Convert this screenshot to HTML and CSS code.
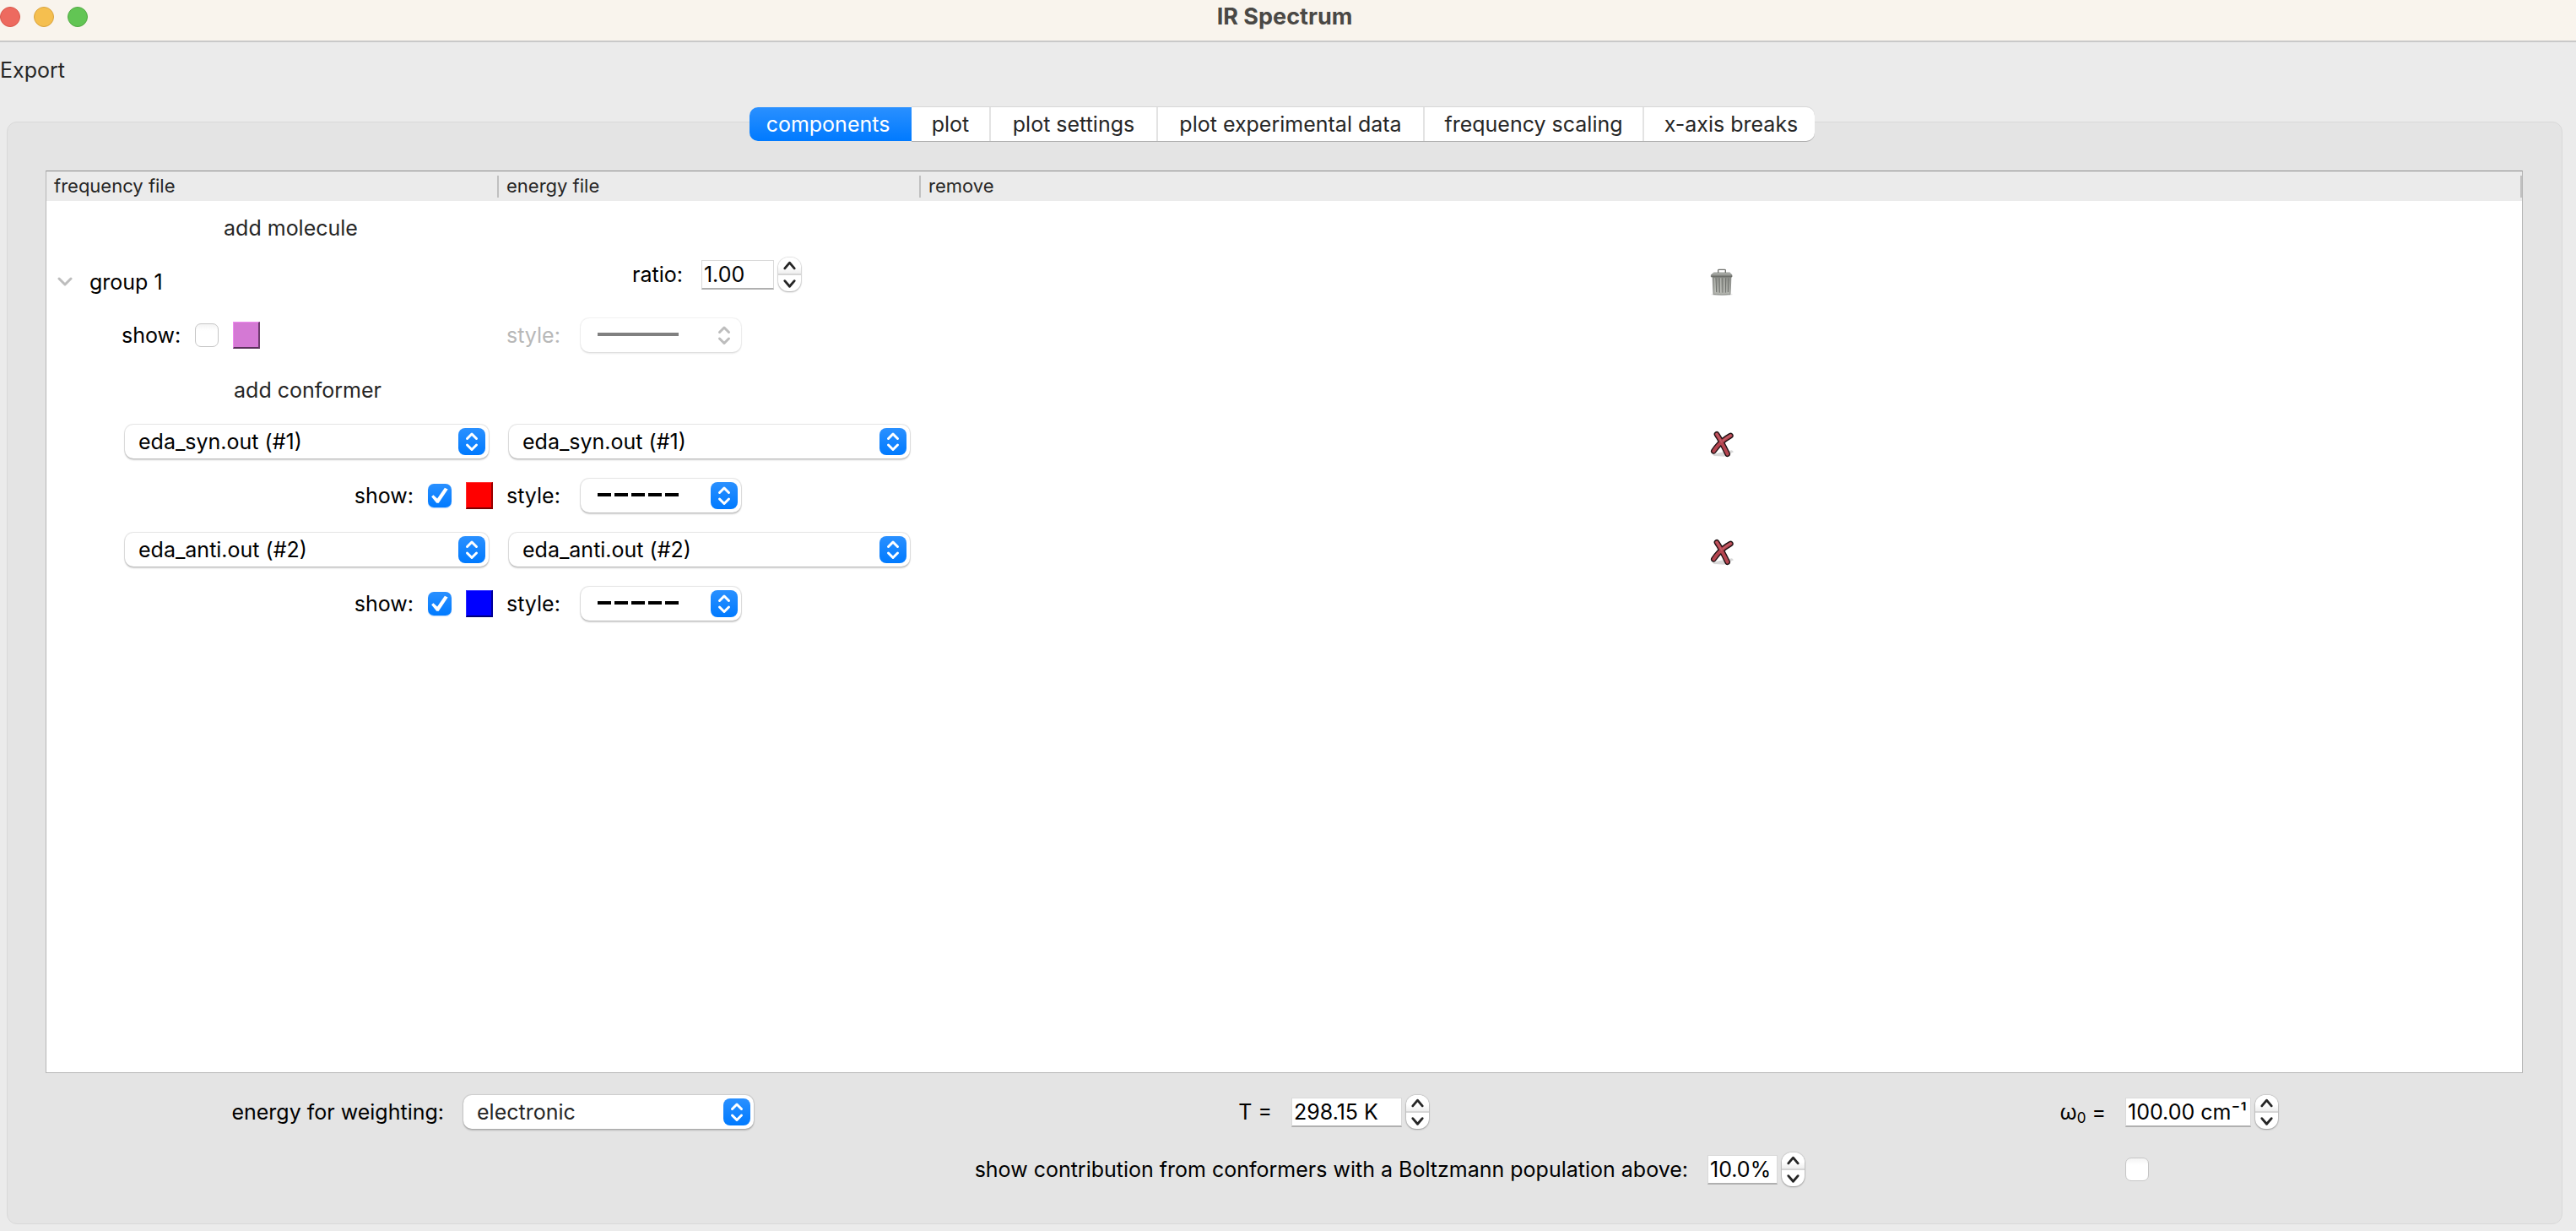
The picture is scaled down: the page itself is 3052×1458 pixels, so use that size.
FILE: index.html
```html
<!DOCTYPE html>
<html lang="en">
<head>
<meta charset="utf-8">
<title>IR Spectrum</title>
<link rel="stylesheet" href="styles.css">
</head>
<body>
<svg class="defs" aria-hidden="true">
  <defs>
    <linearGradient id="trash-fill" x1="0" x2="0" y1="0" y2="1">
      <stop offset="0" stop-color="#8b8d88"/><stop offset="1" stop-color="#b4b6b0"/>
    </linearGradient>
    <linearGradient id="lid-fill" x1="0" x2="0" y1="0" y2="1">
      <stop offset="0" stop-color="#c4c6c1"/><stop offset="1" stop-color="#666864"/>
    </linearGradient>
    <symbol id="arrows" viewBox="0 0 32 32">
      <path d="M10.500 12.500 16 7l5.500 5.500M10.500 20 16 25.500l5.500-5.500" fill="none" stroke="currentColor" stroke-width="3" stroke-linecap="round" stroke-linejoin="round"/>
    </symbol>
    <symbol id="up" viewBox="0 0 28 20">
      <path d="M8 13.500l6-7 6 7" fill="none" stroke="currentColor" stroke-width="3" stroke-linecap="round" stroke-linejoin="round"/>
    </symbol>
    <symbol id="down" viewBox="0 0 28 20">
      <path d="M8 7l6 7 6-7" fill="none" stroke="currentColor" stroke-width="3" stroke-linecap="round" stroke-linejoin="round"/>
    </symbol>
    <symbol id="cross" viewBox="0 0 84 96">
      <path d="M8 84 78 70 84 76 50 92 14 90z" fill="#d8d8d8"/>
      <path d="M24 13Q38 34 62 83M73 18Q34 40 13 73" fill="none" stroke="#1c1012" stroke-width="20" stroke-linecap="round"/>
      <path d="M24 13Q38 34 62 83M73 18Q34 40 13 73" fill="none" stroke="#b44550" stroke-width="12" stroke-linecap="round"/>
      <path d="M23 11Q34 28 42 42M74 16Q56 26 46 36" fill="none" stroke="#c5606a" stroke-width="4" stroke-linecap="round"/>
    </symbol>
    <symbol id="trash" viewBox="0 0 84 96">
      <ellipse cx="42" cy="92" rx="38" ry="4" fill="#e2e2e2"/>
      <path d="M9 26h66l-3 66q-30 3-60 0z" fill="url(#trash-fill)" stroke="#70726e" stroke-width="2"/>
      <path d="M21 34l2 50M33 34l1 52M45 34v52M56 34l-1 52M66 34l-2 50" stroke="#6f716d" stroke-width="3"/>
      <path d="M17 34l2 52M50 34v52M38 34v52" stroke="#c9cbc6" stroke-width="2"/>
      <path d="M29 16V6q0-2 3-2h20q3 0 3 2v10" fill="none" stroke="#6f716d" stroke-width="4"/>
      <path d="M14 15h56l8 8v7H4v-7z" fill="url(#lid-fill)" stroke="#6a6c68" stroke-width="2"/>
    </symbol>
  </defs>
</svg>

<header class="titlebar">
  <div class="lights">
    <button class="light light-close" aria-label="Close"></button>
    <button class="light light-minimize" aria-label="Minimize"></button>
    <button class="light light-zoom" aria-label="Zoom"></button>
  </div>
  <h1 class="title">IR Spectrum</h1>
</header>

<nav class="menubar"><button class="menu">Export</button></nav>

<main class="content">
  <div class="tabs" role="tablist">
    <button class="tab tab-active" role="tab" aria-selected="true">components</button>
    <button class="tab" role="tab">plot</button>
    <button class="tab" role="tab">plot settings</button>
    <button class="tab" role="tab">plot experimental data</button>
    <button class="tab" role="tab">frequency scaling</button>
    <button class="tab" role="tab">x-axis breaks</button>
  </div>

  <section class="panel">
    <div class="tree">
      <table class="grid">
        <colgroup><col class="col-frequency"><col class="col-energy"><col></colgroup>
        <thead>
          <tr><th>frequency file</th><th>energy file</th><th>remove</th></tr>
        </thead>
        <tbody>
          <tr class="row">
            <td class="level-1"><button class="add">add molecule</button></td><td></td><td></td>
          </tr>
          <tr class="row">
            <td>
              <div class="group">
                <button class="expander" aria-label="Collapse group 1">
                  <svg width="18" height="12" viewBox="0 0 18 12"><path d="M2 2l7 7 7-7" fill="none" stroke="#bdbdbd" stroke-width="3" stroke-linecap="round" stroke-linejoin="round"/></svg>
                </button>
                <span>group 1</span>
              </div>
            </td>
            <td class="top">
              <div class="ratio">
                <label for="ratio">ratio:</label>
                <div class="spin">
                  <input id="ratio" class="field field-ratio" value="1.00">
                  <div class="stepper">
                    <button class="step" aria-label="Increase"><svg><use href="#up"/></svg></button>
                    <button class="step" aria-label="Decrease"><svg><use href="#down"/></svg></button>
                  </div>
                </div>
              </div>
            </td>
            <td class="remove"><button class="icon" aria-label="Remove group"><svg width="28" height="32"><use href="#trash"/></svg></button></td>
          </tr>
          <tr class="row-group-show">
            <td>
              <div class="show show-group">
                <label for="show-group">show:</label>
                <input type="checkbox" id="show-group" class="check">
                <button class="swatch swatch-orchid" aria-label="Group color"></button>
              </div>
            </td>
            <td>
              <div class="style style-off">
                <label for="style-group">style:</label>
                <div class="combo combo-line combo-off">
                  <select id="style-group" class="select line-solid" disabled><option value="solid"></option></select>
                  <svg class="arrows"><use href="#arrows"/></svg>
                </div>
              </div>
            </td>
            <td></td>
          </tr>
          <tr class="row">
            <td class="level-2"><button class="add">add conformer</button></td><td></td><td></td>
          </tr>
          <tr class="row-file">
            <td class="file-frequency">
              <div class="combo">
                <select class="select" aria-label="Frequency file 1"><option>eda_syn.out (#1)</option></select>
                <svg class="arrows"><use href="#arrows"/></svg>
              </div>
            </td>
            <td class="file-energy">
              <div class="combo">
                <select class="select" aria-label="Energy file 1"><option>eda_syn.out (#1)</option></select>
                <svg class="arrows"><use href="#arrows"/></svg>
              </div>
            </td>
            <td class="remove remove-file"><button class="icon" aria-label="Remove conformer 1"><svg width="28" height="32"><use href="#cross"/></svg></button></td>
          </tr>
          <tr class="row-show">
            <td>
              <div class="show show-file">
                <label for="show-1">show:</label>
                <input type="checkbox" id="show-1" class="check" checked>
                <button class="swatch swatch-red" aria-label="Conformer 1 color"></button>
              </div>
            </td>
            <td>
              <div class="style">
                <label for="style-1">style:</label>
                <div class="combo combo-line">
                  <select id="style-1" class="select line-dashed"><option value="dashed"></option></select>
                  <svg class="arrows"><use href="#arrows"/></svg>
                </div>
              </div>
            </td>
            <td></td>
          </tr>
          <tr class="row-file">
            <td class="file-frequency">
              <div class="combo">
                <select class="select" aria-label="Frequency file 2"><option>eda_anti.out (#2)</option></select>
                <svg class="arrows"><use href="#arrows"/></svg>
              </div>
            </td>
            <td class="file-energy">
              <div class="combo">
                <select class="select" aria-label="Energy file 2"><option>eda_anti.out (#2)</option></select>
                <svg class="arrows"><use href="#arrows"/></svg>
              </div>
            </td>
            <td class="remove remove-file"><button class="icon" aria-label="Remove conformer 2"><svg width="28" height="32"><use href="#cross"/></svg></button></td>
          </tr>
          <tr class="row-show">
            <td>
              <div class="show show-file">
                <label for="show-2">show:</label>
                <input type="checkbox" id="show-2" class="check" checked>
                <button class="swatch swatch-blue" aria-label="Conformer 2 color"></button>
              </div>
            </td>
            <td>
              <div class="style">
                <label for="style-2">style:</label>
                <div class="combo combo-line">
                  <select id="style-2" class="select line-dashed"><option value="dashed"></option></select>
                  <svg class="arrows"><use href="#arrows"/></svg>
                </div>
              </div>
            </td>
            <td></td>
          </tr>
        </tbody>
      </table>
    </div>

    <form class="options">
      <label for="weighting">energy for weighting:</label>
      <div class="combo combo-weighting">
        <select id="weighting" class="select select-soft"><option>electronic</option></select>
        <svg class="arrows"><use href="#arrows"/></svg>
      </div>
      <label for="temperature">T =</label>
      <div class="spin">
        <input id="temperature" class="field field-temperature" value="298.15 K">
        <div class="stepper">
          <button type="button" class="step" aria-label="Increase"><svg><use href="#up"/></svg></button>
          <button type="button" class="step" aria-label="Decrease"><svg><use href="#down"/></svg></button>
        </div>
      </div>
      <label for="omega">ω<sub>0</sub> =</label>
      <div class="spin">
        <input id="omega" class="field field-omega" value="100.00 cm⁻¹">
        <div class="stepper">
          <button type="button" class="step" aria-label="Increase"><svg><use href="#up"/></svg></button>
          <button type="button" class="step" aria-label="Decrease"><svg><use href="#down"/></svg></button>
        </div>
      </div>
      <label class="wide" for="population">show contribution from conformers with a Boltzmann population above:</label>
      <div class="spin">
        <input id="population" class="field field-population" value="10.0%">
        <div class="stepper">
          <button type="button" class="step" aria-label="Increase"><svg><use href="#up"/></svg></button>
          <button type="button" class="step" aria-label="Decrease"><svg><use href="#down"/></svg></button>
        </div>
      </div>
      <input type="checkbox" class="check option-check" aria-label="Show contributions">
    </form>
  </section>
</main>
</body>
</html>
```
FILE: styles.css
```css
* { box-sizing: border-box; }

body {
  margin: 0;
  min-height: 100vh;
  display: flex;
  flex-direction: column;
  background: #ebebeb;
  color: #000;
  font: 25px/32px Inter, "Liberation Sans", sans-serif;
}

button, input, select { font: inherit; color: inherit; margin: 0; }
button { padding: 0; border: 0; background: none; }
.defs { position: absolute; width: 0; height: 0; }

.titlebar {
  display: grid;
  grid-template-columns: 1fr auto 1fr;
  padding: 0 8px 8px 0;
  height: 50px;
  align-items: center;
  background: #f9f4ed;
  border-bottom: 2px solid #c9c9c9;
}
.lights { display: flex; gap: 16px; }
.light { width: 24px; height: 24px; border-radius: 50%; }
.light-close { background: #ed6a5f; border: 1px solid #d9574b; }
.light-minimize { background: #f5bf4f; border: 1px solid #d9a33e; }
.light-zoom { background: #62c554; border: 1px solid #52a943; }
.title { margin: 0; font-size: 27px; line-height: 32px; font-weight: 700; color: #4a4845; }

.menubar { height: 77px; padding-top: 17px; }
.menu { color: #262626; }

.content { flex: 1; display: flex; flex-direction: column; padding: 0 16px 8px 8px; }

.tabs {
  position: relative;
  display: grid;
  grid-template-columns: 192px 92px 198px 316px 260px 204px;
  justify-content: center;
  padding-right: 6px;
  margin-bottom: -23px;
}
.tab {
  height: 40px;
  background: #fff;
  color: #262626;
  border-left: 2px solid #e3e3e3;
  box-shadow: 0 1px 0 #adadad, 0 -1px 0 #d6d6d6;
}
.tab-active {
  color: #fff;
  background: linear-gradient(#2a90ff, #007aff);
  border-left: 0;
  border-radius: 10px 0 0 10px;
  padding-right: 6px;
  box-shadow: none;
}
.tab-active + .tab { border-left: 0; }
.tab:last-child { border-radius: 0 10px 10px 0; padding-left: 4px; }

.panel {
  flex: 1;
  display: flex;
  flex-direction: column;
  background: #e4e4e4;
  border: 1px solid #d9d9d9;
  border-radius: 12px;
  padding: 57px 46px 30px 45px;
}

.tree { flex: 1; background: #fff; border: 1px solid #b5b5b5; border-top-color: #8c8c8c; }
.grid { width: 100%; table-layout: fixed; border-collapse: collapse; }
.col-frequency { width: 536px; }
.col-energy { width: 500px; }
th {
  height: 35px;
  padding: 0 0 2px 9px;
  text-align: left;
  font-size: 22px;
  line-height: 32px;
  font-weight: 400;
  color: #262626;
  background: linear-gradient(#c0c0c0, #c0c0c0) right center / 2px 26px no-repeat #ebebeb;
}
td { padding: 0; vertical-align: middle; }
.row { height: 64px; }
.row-group-show, .row-file { height: 62px; }
.row-show { height: 66px; }
.level-1 { padding-left: 43px; }
.level-2 { padding: 4px 0 0 83px; }
.add { display: block; margin: 0 auto; color: #262626; }

.group { display: flex; align-items: center; padding-left: 13px; gap: 20px; }
.expander { display: flex; }

.top { vertical-align: top; padding-top: 3px; }
.ratio { display: flex; align-items: center; padding-left: 158px; gap: 22px; }

.show { display: flex; align-items: center; gap: 17px; }
.show-group { padding-left: 89px; }
.show-file { justify-content: flex-end; padding-right: 7px; }
.style { display: flex; align-items: center; padding-left: 9px; gap: 24px; }
.style-off { color: #b8b8b8; }

.file-frequency { padding: 0 12px 0 93px; }
.file-energy { padding: 0 13px 0 12px; }

.remove { text-align: center; }
.remove-file { padding-top: 6px; }
.icon { display: block; margin: 0 auto; }
.icon svg { display: block; }

.check {
  appearance: none;
  flex: none;
  width: 28px;
  height: 28px;
  border: 1px solid #c6c6c6;
  border-radius: 7px;
  background: linear-gradient(#f4f4f4, #fff 30%);
}
.check:checked {
  border: 0;
  background: linear-gradient(#2a90ff, #007aff);
  display: grid;
  place-items: center;
  box-shadow: 0 1px 1px #b8d6fb;
}
.check:checked::before {
  content: "";
  width: 21px;
  height: 20px;
  background: #fff;
  clip-path: polygon(3% 56%, 14% 46%, 36% 68%, 78% 4%, 96% 12%, 44% 94%, 32% 94%);
}

.swatch { width: 32px; height: 32px; border: 1px solid; border-width: 1px 2px 2px 1px; }
.swatch-orchid { background: #d479d4; border-color: #ee8aee #6e3c6e #5a305a #ee8aee; }
.swatch-red { background: #f00; border-color: #ff3030 #900 #700 #ff3030; }
.swatch-blue { background: #00f; border-color: #3030ff #009 #007 #3030ff; }

.combo { position: relative; }
.select {
  appearance: none;
  display: block;
  width: 100%;
  height: 40px;
  padding: 0 40px 0 16px;
  border: 0;
  border-radius: 10px;
  background-color: #fff;
  box-shadow: 0 0 1px 1px rgba(0, 0, 0, .11), 0 2px 2px rgba(0, 0, 0, .18);
}
.select-soft { color: #262626; }
.select:disabled { opacity: 1; box-shadow: 0 0 1px 1px rgba(0, 0, 0, .06), 0 2px 2px rgba(0, 0, 0, .08); }
.arrows {
  position: absolute;
  top: 4px;
  right: 4px;
  width: 32px;
  height: 32px;
  border-radius: 8px;
  color: #fff;
  background: linear-gradient(#2a90ff, #007aff);
  pointer-events: none;
}
.combo-off .arrows { background: none; color: #bdbdbd; }
.combo-line { width: 190px; }
.combo-weighting { width: 344px; }
.line-solid { background: linear-gradient(#808080, #808080) 20px 17px / 96px 4px no-repeat #fff; }
.line-dashed { background: repeating-linear-gradient(90deg, #000 0 16px, #fff 16px 20px) 20px 17px / 96px 4px no-repeat #fff; }

.spin { display: flex; align-items: center; gap: 5px; }
.field {
  height: 35px;
  padding: 0 2px;
  border: 1px solid #d9d9d9;
  border-bottom: 2px solid #b0b0b0;
  background: #fff;
}
.field-ratio { width: 86px; }
.field-temperature { width: 131px; }
.field-omega { width: 149px; }
.field-population { width: 83px; }
.stepper {
  width: 27px;
  height: 40px;
  border-radius: 12px;
  overflow: hidden;
  display: grid;
  grid-template-rows: 1fr 1fr;
  background: #fff;
  color: #262626;
  box-shadow: 0 0 1px 1px rgba(0, 0, 0, .1), 0 1px 2px rgba(0, 0, 0, .25);
}
.step { display: flex; }
.step:first-child { background: linear-gradient(#fff 60%, #eee); border-bottom: 2px solid #d6d6d6; }
.step svg { width: 27px; height: 19px; }

.options {
  display: grid;
  grid-template-columns: 484fr 494fr 487fr 493fr 495fr 482fr;
  grid-auto-rows: 68px;
  align-items: center;
  padding-top: 12px;
}
.options label { text-align: right; padding-right: 12px; }
.options sub { font-size: 17px; line-height: 16px; vertical-align: -4px; }
.options .spin, .combo-weighting, .option-check { margin-left: 11px; }
.wide { grid-column: span 4; }
```
